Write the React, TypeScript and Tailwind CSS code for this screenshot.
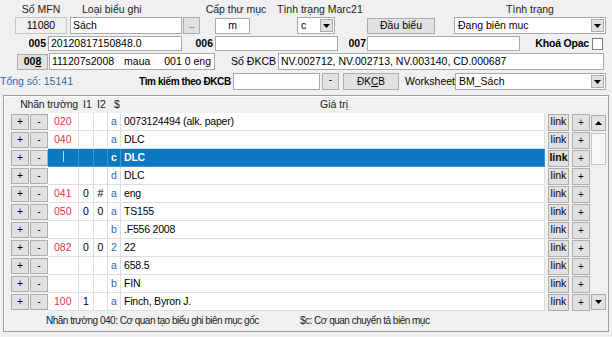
import React from "react";
import clsx from "clsx";

type Row = {
  tag?: string;
  i1?: string;
  i2?: string;
  code: string;
  val: string;
  selected?: boolean;
};

const rows: Row[] = [
  { tag: "020", code: "a", val: "0073124494 (alk. paper)" },
  { tag: "040", code: "a", val: "DLC" },
  { code: "c", val: "DLC", selected: true },
  { code: "d", val: "DLC" },
  { tag: "041", i1: "0", i2: "#", code: "a", val: "eng" },
  { tag: "050", i1: "0", i2: "0", code: "a", val: "TS155" },
  { code: "b", val: ".F556 2008" },
  { tag: "082", i1: "0", i2: "0", code: "2", val: "22" },
  { code: "a", val: "658.5" },
  { code: "b", val: "FIN" },
  { tag: "100", i1: "1", code: "a", val: "Finch, Byron J." },
];

function Btn({
  className,
  children,
}: {
  className?: string;
  children?: React.ReactNode;
}) {
  return (
    <div
      className={clsx(
        "flex shrink-0 items-center justify-center border border-[#adadad] bg-[#e1e1e1] text-black",
        className
      )}
    >
      {children}
    </div>
  );
}

function Box({
  className,
  children,
}: {
  className?: string;
  children?: React.ReactNode;
}) {
  return (
    <div
      className={clsx(
        "flex shrink-0 items-center overflow-hidden border border-[#a9a9a9] bg-white px-[2px] text-black",
        className
      )}
    >
      {children}
    </div>
  );
}

function Arrow({ up }: { up?: boolean }) {
  return (
    <svg width="7" height="4" viewBox="0 0 7 4">
      <path d={up ? "M0 4 L3.5 0 L7 4 Z" : "M0 0 L7 0 L3.5 4 Z"} fill="#000" />
    </svg>
  );
}

function Combo({ className, text }: { className?: string; text: string }) {
  return (
    <div
      className={clsx(
        "flex shrink-0 items-center border border-[#a9a9a9] bg-white pl-[3px] text-black",
        className
      )}
    >
      <span className="flex-1">{text}</span>
      <div className="mr-[1px] flex h-[calc(100%-2px)] w-[13px] items-center justify-center border border-[#adadad] bg-[#e1e1e1]">
        <Arrow />
      </div>
    </div>
  );
}

function TableRow({ row }: { row: Row }) {
  const sel = row.selected;
  const cell = clsx(
    "h-full shrink-0 border-b border-r",
    sel ? "border-[#3d95d0] bg-[#0b78c2]" : "border-[#dedede] bg-white"
  );
  return (
    <div className="flex h-[18px] items-center pl-[7px]">
      <Btn className="h-[16px] w-[18px]">+</Btn>
      <Btn className="ml-[1px] h-[16px] w-[18px]">-</Btn>
      <div className="flex h-full">
        <div className={clsx(cell, "relative w-[31px] pl-[6px] leading-[17px] text-[#e8333c]")}>
          {row.tag}
          {sel && <div className="absolute left-[15px] top-[2px] h-[11px] w-px bg-[#bcd6ea]" />}
        </div>
        <div className={clsx(cell, "w-[15px] text-center leading-[17px]")}>{row.i1}</div>
        <div className={clsx(cell, "w-[14px] text-center leading-[17px]")}>{row.i2}</div>
        <div
          className={clsx(
            cell,
            "w-[13px] text-center leading-[17px]",
            sel ? "font-bold text-white" : "text-[#3466a6]"
          )}
        >
          {row.code}
        </div>
        <div
          className={clsx(
            cell,
            "w-[424px] pl-[3px] leading-[17px] tracking-[-0.2px]",
            sel ? "font-bold text-white" : "text-black"
          )}
        >
          {row.val}
        </div>
      </div>
      <Btn
        className={clsx(
          "ml-[3px] h-[17px] w-[21px] text-[#333]",
          sel && "border-[#555] font-bold text-black"
        )}
      >
        link
      </Btn>
      <Btn className="ml-[3px] h-[17px] w-[18px] text-[10px]">+</Btn>
    </div>
  );
}

export default function App() {
  return (
    <div className="h-[337px] w-[612px] overflow-hidden whitespace-nowrap bg-[#f0f0f0] pt-[3px] font-['Liberation_Sans',Arial,sans-serif] text-[10.5px] text-black">
      {/* labels */}
      <div className="flex h-[13px] items-center leading-[13px] text-[#222]">
        <span className="ml-[15px] w-[52px] text-center">Số MFN</span>
        <span className="ml-[15px] w-[120px]">Loại biểu ghi</span>
        <span className="w-[68px] text-center">Cấp thư mục</span>
        <span className="ml-[7px] w-[90px]">Tình trạng Marc21</span>
        <span className="ml-[87px] w-[152px] text-center">Tình trạng</span>
      </div>

      {/* row 2 */}
      <div className="mt-[1px] flex h-[17px] items-center">
        <div className="ml-[15px] flex h-[17px] w-[52px] items-center justify-center border border-[#c4c4c4] bg-[#f0f0f0]">
          11080
        </div>
        <Box className="ml-[3px] h-[17px] w-[112px]">Sách</Box>
        <Btn className="ml-[1px] h-[17px] w-[17px] text-[8px] text-[#555]">...</Btn>
        <Box className="ml-[15px] h-[16px] w-[35px] justify-center text-[#777]">m</Box>
        <Combo className="ml-[47px] h-[17px] w-[38px]" text="c" />
        <Btn className="ml-[32px] h-[16px] w-[68px]">Đầu biểu</Btn>
        <Combo className="ml-[19px] h-[17px] w-[152px]" text="Đang biên muc" />
      </div>

      {/* row 3 */}
      <div className="mt-[2px] flex h-[15px] items-center">
        <span className="w-[47px] pr-[1px] text-right font-bold">005</span>
        <Box className="ml-[1px] h-[15px] w-[134px]">20120817150848.0</Box>
        <span className="w-[32px] pr-[1px] text-right font-bold">006</span>
        <Box className="ml-[1px] h-[15px] w-[123px]">{""}</Box>
        <span className="w-[29px] pr-[1px] text-right font-bold">007</span>
        <Box className="h-[15px] w-[153px]">{""}</Box>
        <span className="w-[71px] pr-[2px] text-right font-bold tracking-[-0.2px]">Khoá Opac</span>
        <div className="ml-[1px] h-[12px] w-[11px] border border-[#7a7a7a] bg-white" />
      </div>

      {/* row 4 */}
      <div className="mt-[2px] flex h-[17px] items-center">
        <Btn className="ml-[17px] h-[16px] w-[31px] font-bold">
          00<span className="underline">8</span>
        </Btn>
        <Box className="ml-[1px] h-[17px] w-[166px] pr-[3px]">
          <span>111207s2008</span>
          <span className="ml-[10px]">maua</span>
          <span className="ml-auto">001 0 eng</span>
        </Box>
        <span className="w-[63px] pr-[2px] text-right">Số ĐKCB</span>
        <Box className="h-[17px] w-[326px]">NV.002712, NV.002713, NV.003140, CD.000687</Box>
      </div>

      {/* row 5 */}
      <div className="mt-[3px] flex h-[17px] items-center">
        <span className="w-[139px] text-[#2a68ad]">Tổng số: 15141</span>
        <span className="w-[93px] text-[10px] font-bold tracking-[-0.4px]">Tìm kiếm theo ĐKCB</span>
        <Box className="ml-[1px] h-[17px] w-[87px]">{""}</Box>
        <Btn className="ml-[2px] h-[17px] w-[17px] items-start leading-[10px]">-</Btn>
        <Btn className="ml-[4px] h-[17px] w-[56px] text-[10px]">
          ĐK<span className="underline">C</span>B
        </Btn>
        <span className="ml-[6px] w-[50px]">Worksheet</span>
        <Combo className="h-[17px] w-[151px]" text="BM_Sách" />
      </div>

      {/* field table panel */}
      <div className="ml-[3px] mt-[5px] h-[237px] w-[606px] border border-[#9f9f9f] shadow-[inset_1px_1px_0_#ffffff]">
        <div className="flex h-[17px] items-center text-[#222]">
          <span className="w-[76px] pr-[2px] text-right tracking-[-0.2px]">Nhãn trường</span>
          <span className="ml-[3px] w-[14px]">I1</span>
          <span className="w-[17px]">I2</span>
          <span className="w-[14px]">$</span>
          <span className="ml-[192px]">Giá trị</span>
        </div>
        <div className="flex h-[198px]">
          <div className="flex flex-col">
            {rows.map((r, i) => (
              <TableRow key={i} row={r} />
            ))}
          </div>
          <div className="ml-[1px] flex w-[15px] flex-col">
            <Btn className="mt-[2px] h-[16px] w-[15px]">
              <Arrow up />
            </Btn>
            <div className="mt-[2px] h-[32px] w-[15px] border border-[#c4c4c4] bg-[#f7f7f7]" />
            <div className="flex-1" />
            <Btn className="mb-[1px] h-[16px] w-[15px]">
              <Arrow />
            </Btn>
          </div>
        </div>
        <div className="flex h-[19px] items-center text-[10px] tracking-[-0.5px] text-[#222]">
          <span className="ml-[42px] w-[254px]">Nhãn trường 040: Cơ quan tạo biểu ghi biên mục gốc</span>
          <span>$c: Cơ quan chuyển tả biên mục</span>
        </div>
      </div>
    </div>
  );
}
